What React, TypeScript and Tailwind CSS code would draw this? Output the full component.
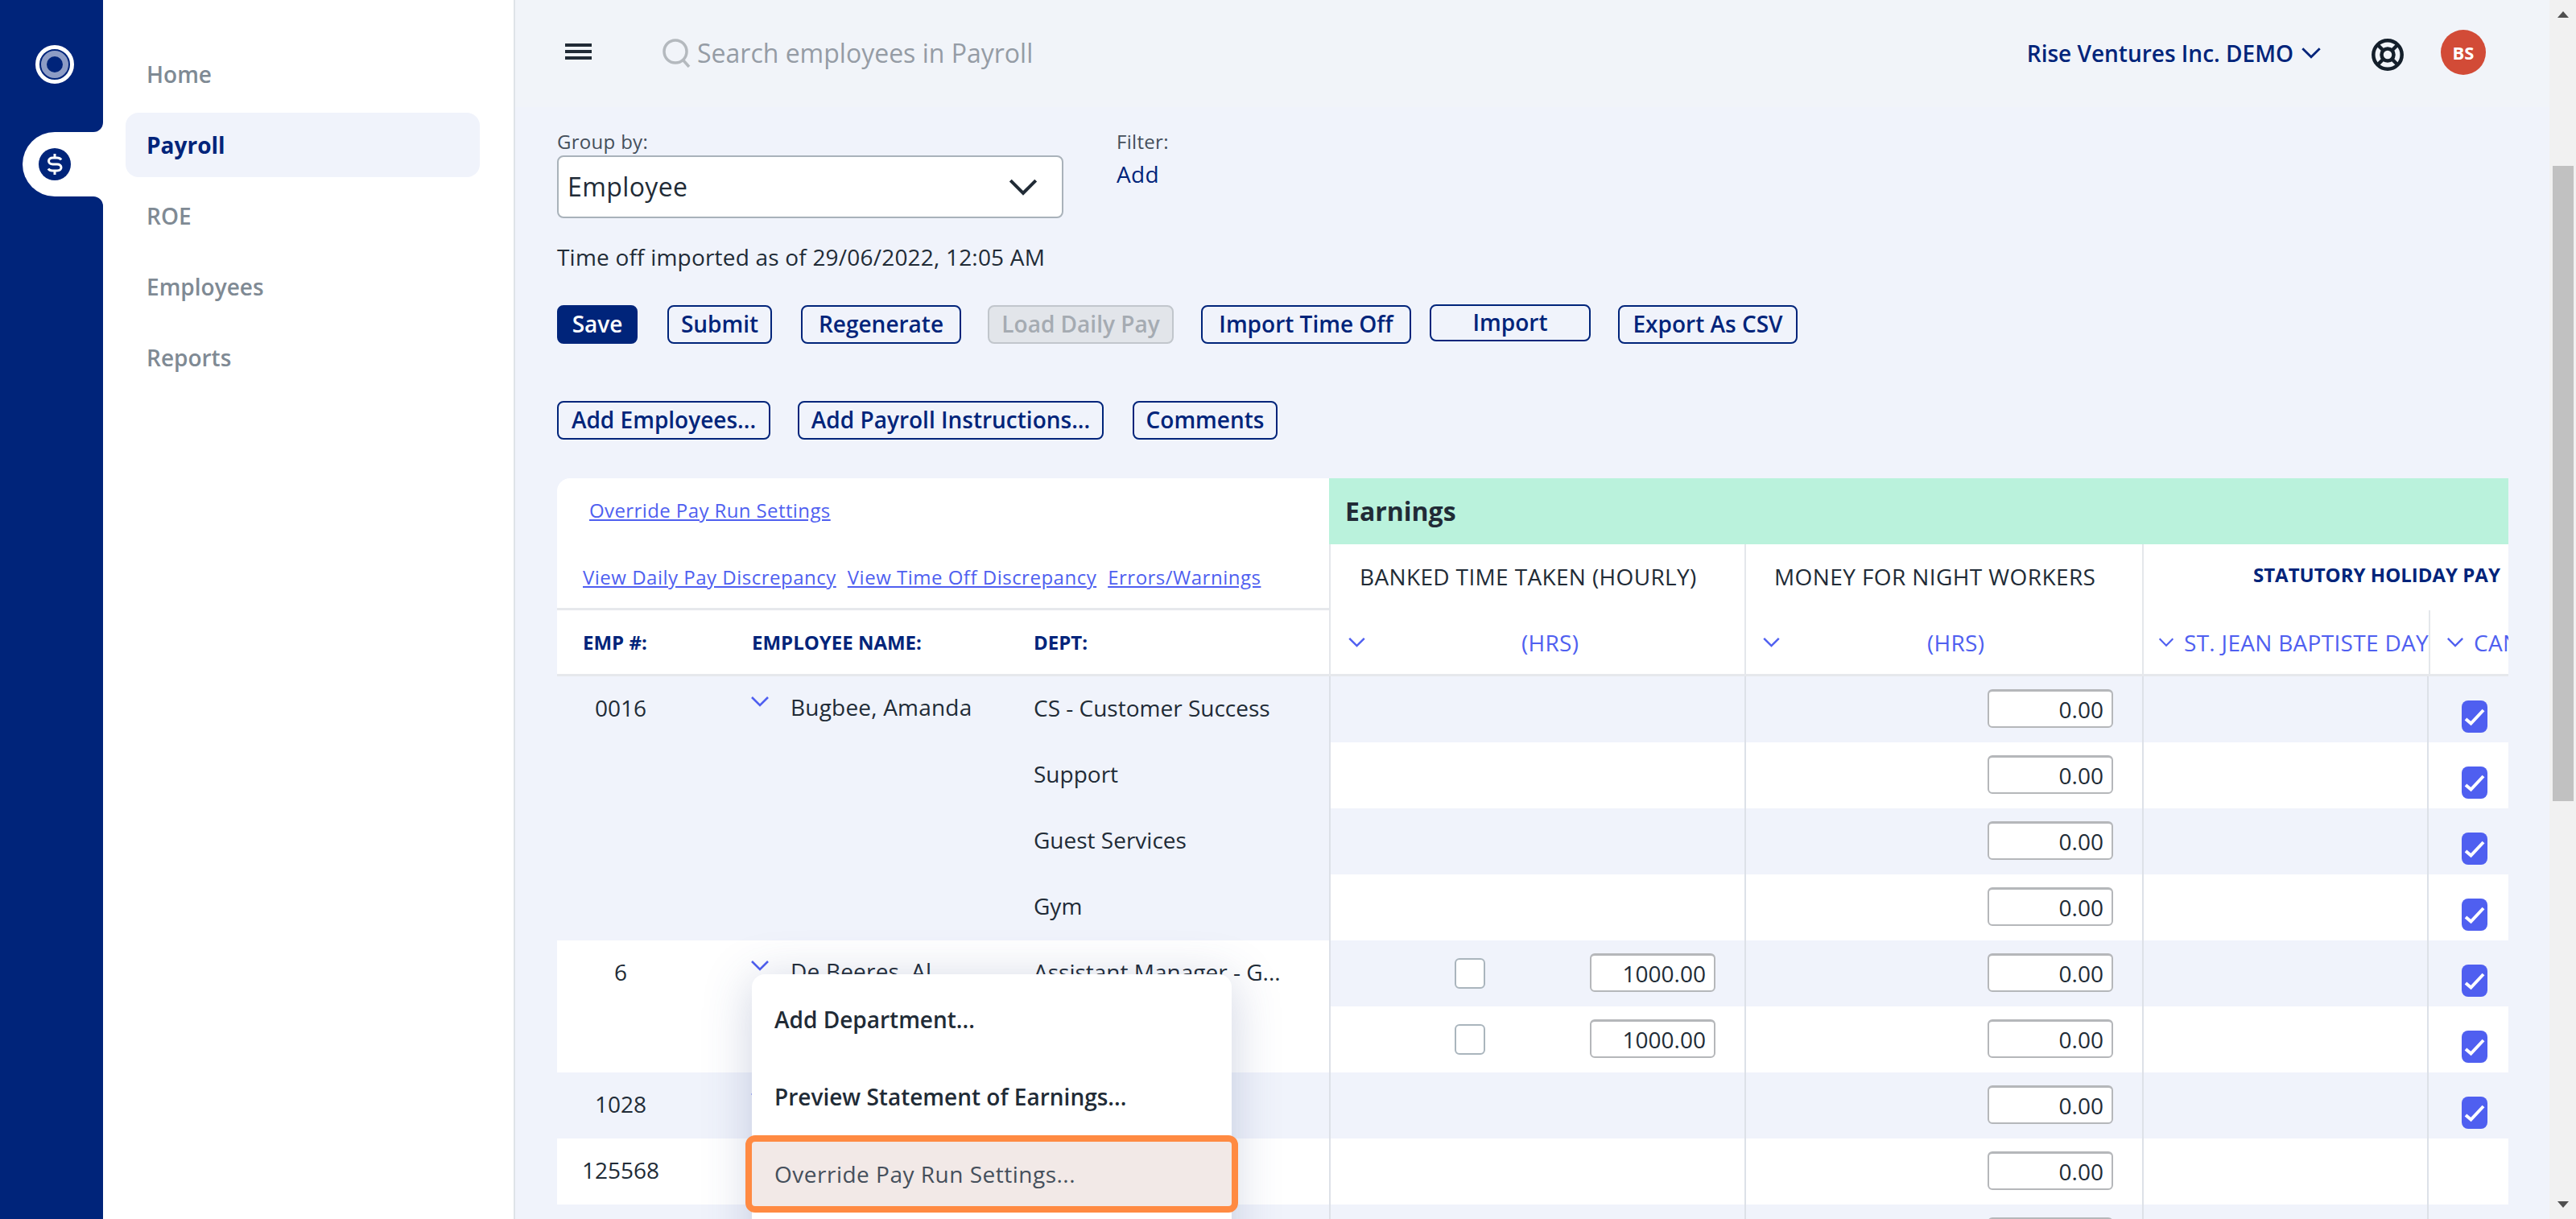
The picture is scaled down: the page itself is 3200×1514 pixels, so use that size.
const font = "font-['Open_Sans',sans-serif]";

function Chevron({ className }: { className: string }) {
  return (
    <svg viewBox="0 0 24 14" fill="none" stroke="currentColor" strokeWidth="2.6" className={className}>
      <path d="M2 2l10 10L22 2" />
    </svg>
  );
}

function Logo() {
  return (
    <svg viewBox="0 0 48 48" className="w-12 h-12">
      <circle cx="24" cy="24" r="21.500" fill="none" stroke="#fff" strokeWidth="5" />
      <circle cx="24" cy="24" r="13.500" fill="none" stroke="#8d9cc5" strokeWidth="7" />
    </svg>
  );
}

function DollarIcon() {
  return (
    <svg viewBox="0 0 40 40" className="w-10 h-10">
      <circle cx="20" cy="20" r="20" fill="#00247a" />
      <path
        d="M28 14.500c-1-1.600-2.800-2.500-5-2.500h-5.500c-3 0-5 1.700-5 4s2 4 5 4h5.500c3 0 5 1.700 5 4s-2 4-5 4H17c-2.200 0-4-.9-5-2.500"
        fill="none"
        stroke="#fff"
        strokeWidth="3"
      />
      <path d="M20 7v5M20 28v5" stroke="#fff" strokeWidth="3" />
    </svg>
  );
}

function LifeBuoyIcon() {
  return (
    <svg viewBox="0 0 40 40" className="w-10 h-10" fill="none" stroke="#141f2b" strokeWidth="4.500">
      <circle cx="20" cy="20" r="17.700" />
      <circle cx="20" cy="20" r="7.500" />
      <path d="M7.500 7.500l7 7M32.500 7.500l-7 7M7.500 32.500l7-7M32.500 32.500l-7-7" />
    </svg>
  );
}

function Sidebar() {
  return (
    <div className="w-[128px] shrink-0 bg-[#00247a] flex flex-col">
      <div className="h-[164px] pt-14 pl-11">
        <Logo />
      </div>
      <div className="relative h-[80px] ml-7 bg-white rounded-l-[40px] flex items-center pl-5">
        <DollarIcon />
        <div className="absolute right-0 -top-3 w-3 h-3 bg-white">
          <div className="w-full h-full bg-[#00247a] rounded-br-xl" />
        </div>
        <div className="absolute right-0 -bottom-3 w-3 h-3 bg-white">
          <div className="w-full h-full bg-[#00247a] rounded-tr-xl" />
        </div>
      </div>
    </div>
  );
}

function SubNav() {
  const items = ["Home", "Payroll", "ROE", "Employees", "Reports"];
  return (
    <div className="w-[512px] shrink-0 bg-white border-r-2 border-[#dfe3e8] pt-[52px] pl-7 pr-[42px] flex flex-col gap-2">
      {items.map((item) =>
        item === "Payroll" ? (
          <div key={item} className="h-20 rounded-2xl bg-[#f0f3fb] flex items-center px-[26px] text-[28px] font-bold text-[#00247a]">
            {item}
          </div>
        ) : (
          <div key={item} className="h-20 flex items-center px-[26px] text-[28px] font-semibold text-[#7f8a94]">
            {item}
          </div>
        ),
      )}
    </div>
  );
}

function TopBar() {
  return (
    <div className="h-[133px] shrink-0 bg-[#f1f4f9] flex items-start pt-[30px] pl-[62px] pr-[79px]">
      <div className="w-[33px] h-[20px] mt-6 flex flex-col justify-between">
        <div className="h-1 bg-[#212b36]" />
        <div className="h-1 bg-[#212b36]" />
        <div className="h-1 bg-[#212b36]" />
      </div>
      <svg viewBox="0 0 36 36" className="w-9 h-9 ml-[87px] mt-[18px]" fill="none" stroke="#b4b9be" strokeWidth="3.500">
        <circle cx="17" cy="16" r="14" />
        <path d="M26 26l8 9" />
      </svg>
      <div className="ml-2 mt-[14px] text-[32px] leading-[44px] text-[#959ca5]">Search employees in Payroll</div>
      <div className="flex-1" />
      <div className="mt-[14px] text-[28px] leading-[44px] font-semibold text-[#00247a]">Rise Ventures Inc. DEMO</div>
      <Chevron className="w-[26px] h-[15px] ml-[9px] mt-[28px] text-[#00247a]" />
      <div className="ml-[62px] mt-[18px]">
        <LifeBuoyIcon />
      </div>
      <div className="ml-[46px] mt-[7px] w-14 h-14 rounded-full bg-[#d24b37] flex items-center justify-center text-white text-[22px] font-bold">
        BS
      </div>
    </div>
  );
}

function Btn({ label, width, primary, disabled }: { label: string; width: string; primary?: boolean; disabled?: boolean }) {
  const look = primary
    ? "bg-[#00247a] border-[#00247a] text-white font-bold"
    : disabled
      ? "bg-[#e2e5ea] border-[#c1c6cc] text-[#a5abb2]"
      : "bg-transparent border-[#00247a] text-[#00247a]";
  return (
    <div className={`${width} h-12 pb-[2px] flex items-center justify-center border-2 rounded-lg text-[28px] font-semibold whitespace-nowrap ${look}`}>
      {label}
    </div>
  );
}

function Controls() {
  return (
    <div className="shrink-0 pl-[52px]">
      <div className="flex gap-[66px] pt-[27px]">
        <div>
          <div className="text-[24px] leading-8 tracking-[0.3px] text-[#454f5b]">Group by:</div>
          <div className="w-[629px] h-[78px] mt-[1px] bg-white border-2 border-[#a9b2ba] rounded-lg flex items-center justify-between pl-[11px] pr-[29px]">
            <span className="text-[32px] font-medium tracking-[0.4px] text-[#212b36]">Employee</span>
            <Chevron className="w-[38px] h-[22px] text-[#212b36]" />
          </div>
        </div>
        <div>
          <div className="text-[24px] leading-8 tracking-[0.3px] text-[#454f5b]">Filter:</div>
          <div className="text-[28px] leading-9 mt-[6px] font-medium tracking-[0.3px] text-[#00247a]">Add</div>
        </div>
      </div>
      <div className="mt-[30px] text-[28px] leading-9 tracking-[0.2px] text-[#212b36]">Time off imported as of 29/06/2022, 12:05 AM</div>
      <div className="flex mt-[42px]">
        <Btn label="Save" width="w-[100px]" primary />
        <div className="w-[37px]" />
        <Btn label="Submit" width="w-[130px]" />
        <div className="w-9" />
        <Btn label="Regenerate" width="w-[199px]" />
        <div className="w-[33px]" />
        <Btn label="Load Daily Pay" width="w-[231px]" disabled />
        <div className="w-[34px]" />
        <Btn label="Import Time Off" width="w-[261px]" />
        <div className="w-[23px]" />
        <div className="h-[46px] -mt-px w-[200px] flex justify-center border-2 border-[#00247a] rounded-lg pt-[2px] text-[28px] leading-9 font-semibold text-[#00247a]">
          Import
        </div>
        <div className="w-[34px]" />
        <Btn label="Export As CSV" width="w-[223px]" />
      </div>
      <div className="flex mt-[71px]">
        <Btn label="Add Employees..." width="w-[265px]" />
        <div className="w-[34px]" />
        <Btn label="Add Payroll Instructions..." width="w-[380px]" />
        <div className="w-9" />
        <Btn label="Comments" width="w-[180px]" />
      </div>
    </div>
  );
}

const rows: { id?: string; name?: string; dept?: string; tint: boolean; banked?: boolean; check: boolean }[] = [
  { id: "0016", name: "Bugbee, Amanda", dept: "CS - Customer Success", tint: true, check: true },
  { dept: "Support", tint: true, check: true },
  { dept: "Guest Services", tint: true, check: true },
  { dept: "Gym", tint: true, check: true },
  { id: "6", name: "De Beeres, Al", dept: "Assistant Manager - G...", tint: false, banked: true, check: true },
  { tint: false, banked: true, check: true },
  { id: "1028", tint: true, check: true },
  { id: "125568", tint: false, check: false },
  { tint: true, check: false },
];

function NumBox({ value }: { value: string }) {
  return (
    <div className="w-[156px] h-12 mb-[2px] bg-white border-2 border-t-[3px] border-[#b5b7ba] rounded-md flex items-center justify-end pr-[10px] text-[28px] text-[#212b36]">
      {value}
    </div>
  );
}

function CheckOn() {
  return (
    <div className="w-8 h-10 rounded-lg bg-[#4f5ff0]">
      <svg viewBox="0 0 32 40" className="w-8 h-10" fill="none" stroke="#fff" strokeWidth="4">
        <path d="M5 23l6.500 5.500L27 12" />
      </svg>
    </div>
  );
}

function PayrollTable() {
  return (
    <div className="flex-1 min-h-0 mt-[48px] ml-[52px] mr-[51px] flex overflow-hidden">
      {/* frozen employee columns */}
      <div className="w-[959px] shrink-0">
        <div className="h-[164px] bg-white rounded-tl-2xl border-b-[3px] border-[#e6e8ec]">
          <div className="pt-[25px] pl-[40px] text-[24px] leading-[30px] tracking-[0.4px]">
            <span className="text-[#4f5ff0] underline">Override Pay Run Settings</span>
          </div>
          <div className="mt-[53px] pl-[32px] flex gap-[14px] text-[24px] leading-[30px] tracking-[0.5px] text-[#4f5ff0] underline whitespace-nowrap">
            <span>View Daily Pay Discrepancy</span>
            <span>View Time Off Discrepancy</span>
            <span>Errors/Warnings</span>
          </div>
        </div>
        <div className="h-[82px] bg-white border-b-[3px] border-[#e6e8ec] flex items-center text-[24px] font-bold text-[#00247a]">
          <div className="w-[242px] pl-[32px]">EMP #:</div>
          <div className="w-[350px]">EMPLOYEE NAME:</div>
          <div>DEPT:</div>
        </div>
        {rows.map((row, i) => (
          <div key={i} className={`h-[82px] flex ${row.tint ? "bg-[#f0f3fb]" : "bg-white"} text-[28px] text-[#212b36]`}>
            <div className="w-[158px] pt-[21px] text-center leading-9">{row.id}</div>
            <div className="w-[84px]" />
            <div className="w-[350px] flex items-start pt-5 leading-9">
              {row.id && (
                <>
                  <Chevron className="w-6 h-[14px] mt-1 -ml-[2px] text-[#4f5ff0]" />
                  <span className="ml-[26px] font-medium tracking-[0.2px]">{row.name}</span>
                </>
              )}
            </div>
            <div className="pt-[21px] leading-9 whitespace-nowrap">{row.dept}</div>
          </div>
        ))}
      </div>
      {/* earnings columns */}
      <div className="flex-1 min-w-0 overflow-hidden">
        <div className="h-[82px] bg-[#baf2dc] flex items-center pl-[20px] text-[32px] font-bold text-[#212b36]">Earnings</div>
        <div className="flex h-[164px] bg-white border-b-[3px] border-[#e6e8ec] w-[1600px]">
          <div className="w-[516px] border-l-2 border-[#e4e7eb] flex flex-col">
            <div className="h-[82px] pt-[22px] pl-[36px] text-[28px] leading-9 tracking-[0.35px] text-[#212b36] font-medium whitespace-nowrap">BANKED TIME TAKEN (HOURLY)</div>
            <div className="flex-1 flex items-center pl-[21px]">
              <Chevron className="w-[23px] h-[13px] text-[#4f5ff0]" />
              <span className="ml-[193px] text-[28px] tracking-[0.3px] text-[#4f5ff0] font-medium">(HRS)</span>
            </div>
          </div>
          <div className="w-[494px] border-l-2 border-[#e4e7eb] flex flex-col">
            <div className="h-[82px] pt-[22px] pl-[35px] text-[28px] leading-9 tracking-[0.4px] text-[#212b36] font-medium whitespace-nowrap">MONEY FOR NIGHT WORKERS</div>
            <div className="flex-1 flex items-center pl-[20px]">
              <Chevron className="w-[23px] h-[13px] text-[#4f5ff0]" />
              <span className="ml-[182px] text-[28px] tracking-[0.3px] text-[#4f5ff0] font-medium">(HRS)</span>
            </div>
          </div>
          <div className="flex-1 border-l-2 border-[#e4e7eb] flex flex-col">
            <div className="h-[82px] pt-[22px] pl-[136px] text-[24px] leading-8 font-bold text-[#00247a] whitespace-nowrap">STATUTORY HOLIDAY PAY</div>
            <div className="flex-1 flex">
              <div className="w-[354px] flex items-center pl-[18px] whitespace-nowrap text-[28px] tracking-[0.3px] text-[#4f5ff0] font-medium">
                <Chevron className="w-[22px] h-[13px]" />
                <span className="ml-[12px]">ST. JEAN BAPTISTE DAY</span>
              </div>
              <div className="border-l-2 border-[#e4e7eb] flex items-center pl-[20px] whitespace-nowrap text-[28px] tracking-[0.3px] text-[#4f5ff0] font-medium">
                <Chevron className="w-[22px] h-[13px]" />
                <span className="ml-[12px]">CANADA DAY</span>
              </div>
            </div>
          </div>
        </div>
        {rows.map((row, i) => (
          <div key={i} className={`h-[82px] flex w-[1600px] ${i % 2 === 0 ? "bg-[#f0f3fb]" : "bg-white"}`}>
            <div className="w-[516px] border-l-2 border-[#dde1e8] flex items-center">
              {row.banked && (
                <>
                  <div className="ml-[154px] w-[38px] h-[38px] bg-white border-2 border-[#aab5bd] rounded-md" />
                  <div className="ml-[130px]">
                    <NumBox value="1000.00" />
                  </div>
                </>
              )}
            </div>
            <div className="w-[494px] border-l-2 border-[#dde1e8] flex items-center pl-[300px]">
              <NumBox value="0.00" />
            </div>
            <div className="w-[354px] border-l-2 border-[#dde1e8]" />
            <div className="flex-1 border-l-2 border-[#dde1e8] pl-[41px] pt-[30px]">{row.check && <CheckOn />}</div>
          </div>
        ))}
      </div>
    </div>
  );
}

function RowMenu() {
  return (
    <div className="absolute left-[934px] top-[1210px] w-[596px] h-[400px] pt-2 bg-white rounded-2xl shadow-[0_8px_60px_rgba(60,80,140,0.25)] text-[28px] font-semibold text-[#212b36]">
      <div className="h-24 flex items-center pl-7">Add Department...</div>
      <div className="h-24 flex items-center pl-7">Preview Statement of Earnings...</div>
      <div className="h-24 -mx-2 flex items-center pl-7 border-8 border-[#ff8a42] rounded-xl bg-[#f2e9e7] font-medium tracking-[0.5px] text-[#454f5b]">
        Override Pay Run Settings...
      </div>
    </div>
  );
}

function Scrollbar() {
  return (
    <div className="w-[33px] shrink-0 bg-[#f1f1f1] flex flex-col items-center">
      <div className="h-[206px] w-full flex justify-center pt-[14px]">
        <div className="w-0 h-0 border-x-[7px] border-x-transparent border-b-[8px] border-b-[#505050]" />
      </div>
      <div className="w-[26px] h-[789px] bg-[#c1c1c1]" />
      <div className="flex-1" />
      <div className="pb-[14px]">
        <div className="w-0 h-0 border-x-[7px] border-x-transparent border-t-[8px] border-t-[#505050]" />
      </div>
    </div>
  );
}

export default function App() {
  return (
    <div className={`h-screen w-screen overflow-hidden flex bg-[#f0f3fb] relative ${font}`}>
      <Sidebar />
      <SubNav />
      <div className="flex-1 min-w-0 flex flex-col">
        <TopBar />
        <Controls />
        <PayrollTable />
      </div>
      <Scrollbar />
      <RowMenu />
    </div>
  );
}
